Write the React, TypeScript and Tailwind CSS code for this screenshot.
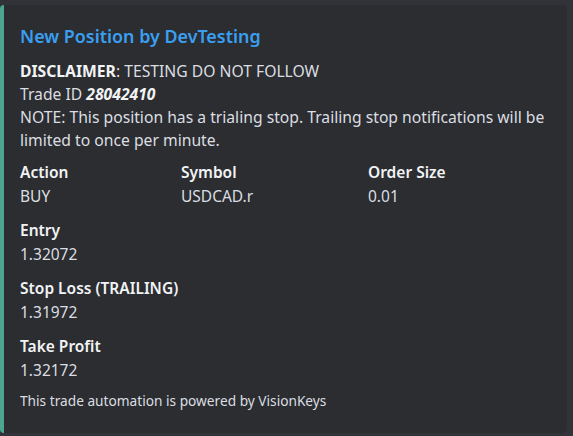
import React from 'react';

const fields = [
  { name: 'Action', value: 'BUY' },
  { name: 'Symbol', value: 'USDCAD.r' },
  { name: 'Order Size', value: '0.01' },
];

const rows = [
  { name: 'Entry', value: '1.32072' },
  { name: 'Stop Loss (TRAILING)', value: '1.31972' },
  { name: 'Take Profit', value: '1.32172' },
];

const Field: React.FC<{ name: string; value: string }> = ({ name, value }) => (
  <div className="flex flex-col">
    <div className="text-[15.5px] leading-[23px] font-semibold text-[#f2f3f5]">{name}</div>
    <div className="mt-px text-[15.5px] leading-[23px] text-[#dbdee1]">{value}</div>
  </div>
);

const App: React.FC = () => {
  return (
    <div className="w-[573px] h-[436px] bg-[#323339] pt-[5px] overflow-hidden" style={{ fontFamily: '"Noto Sans", sans-serif' }}>
      <div className="flex w-[567px] h-[428px]">
        {/* accent bar */}
        <div className="w-[4px] bg-[#4ba58f] rounded-l-[4px]" />
        <div className="flex-1 bg-[#2b2d31] rounded-r-[5px] pl-4 pr-4 pt-[20px]">
          <div className="text-[17.9px] leading-[23px] font-semibold text-[#3a9ff0]">New Position by DevTesting</div>

          <div className="mt-[12px] text-[15.7px] leading-[23px] text-[#dbdee1]">
            <div>
              <span className="font-bold text-[#f2f3f5]">DISCLAIMER</span>: TESTING DO NOT FOLLOW
            </div>
            <div>
              Trade ID <span className="font-bold italic text-[#f2f3f5]">28042410</span>
            </div>
            <div>
              NOTE: This position has a trialing stop. Trailing stop notifications will be limited to once per minute.
            </div>
          </div>

          <div className="mt-[9px] flex flex-col gap-[11px]">
            <div className="grid grid-cols-[161px_187px_1fr]">
              {fields.map((f) => (
                <Field key={f.name} name={f.name} value={f.value} />
              ))}
            </div>
            {rows.map((f) => (
              <Field key={f.name} name={f.name} value={f.value} />
            ))}
          </div>

          <div className="mt-[10px] text-[13.7px] leading-[18px] text-[#dbdee1]">
            This trade automation is powered by VisionKeys
          </div>
        </div>
      </div>
    </div>
  );
};

export default App;
